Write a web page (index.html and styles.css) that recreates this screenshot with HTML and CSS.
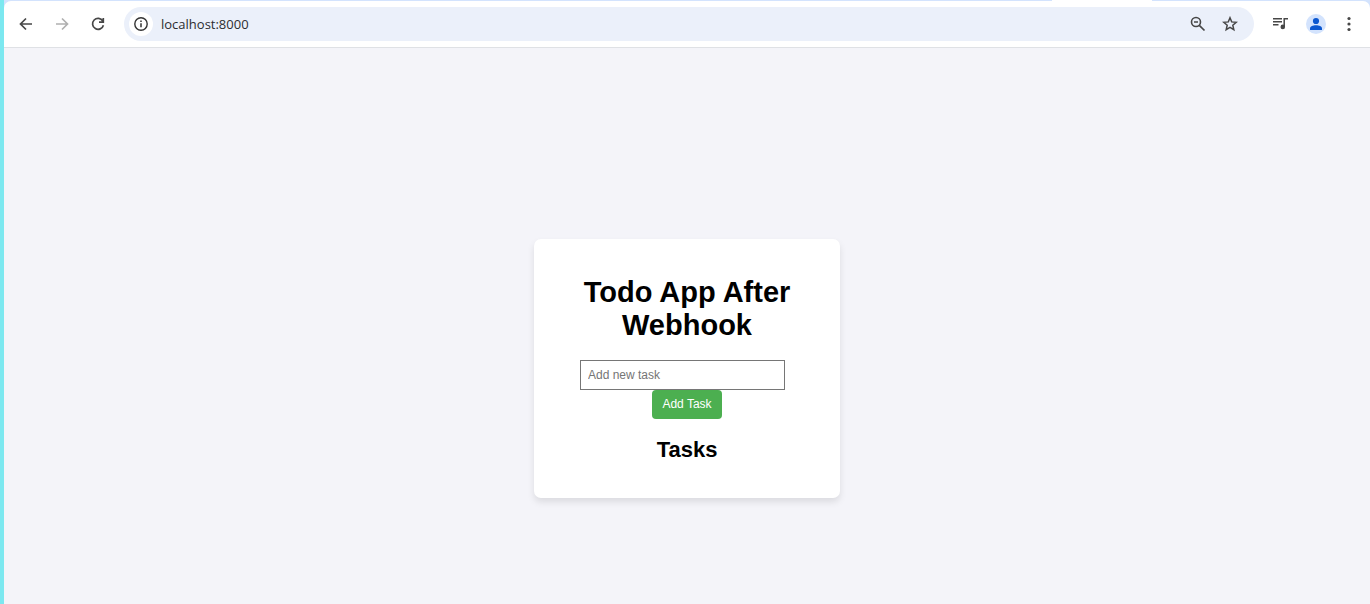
FILE: index.html
```
<!DOCTYPE html>
<html lang="en">
<head>
<meta charset="utf-8">
<title>Todo App</title>
<link rel="stylesheet" href="styles.css">
</head>
<body>
<div class="window">
  <div class="tab-strip"><div class="active-tab"></div></div>
  <header class="toolbar">
    <nav class="nav" aria-label="Navigation">
      <button class="icon-button" type="button" aria-label="Back"><svg viewBox="0 0 16 16"><path d="M14 8H3M8 2.500 2.500 8 8 13.500" fill="none" stroke="currentColor" stroke-width="1.700"/></svg></button>
      <button class="icon-button muted" type="button" aria-label="Forward"><svg viewBox="0 0 16 16"><path d="M2 8h11M8 2.500 13.500 8 8 13.500" fill="none" stroke="currentColor" stroke-width="1.700"/></svg></button>
      <button class="icon-button" type="button" aria-label="Reload"><svg viewBox="0 0 16 16"><path d="M12.800 5A5.500 5.500 0 1 0 13.400 9.200M13.300 2v4.200H9" fill="none" stroke="currentColor" stroke-width="1.700"/></svg></button>
    </nav>
    <div class="omnibox">
      <button class="site-info" type="button" aria-label="Site information"><svg viewBox="0 0 16 16"><circle cx="8" cy="8" r="6.200" fill="none" stroke="currentColor" stroke-width="1.400"/><path d="M8 7.200v4M8 4.600v1.500" stroke="currentColor" stroke-width="1.500"/></svg></button>
      <input class="address" type="text" value="localhost:8000" aria-label="Address">
      <button class="icon-button" type="button" aria-label="Zoom out"><svg viewBox="0 0 16 16"><circle cx="6" cy="6" r="4.500" fill="none" stroke="currentColor" stroke-width="1.600"/><path d="M9.300 9.300 14.500 14.500M4 6h4" fill="none" stroke="currentColor" stroke-width="1.700"/></svg></button>
      <button class="icon-button" type="button" aria-label="Bookmark"><svg viewBox="0 0 16 16"><path d="m8 1.800 1.700 4.100 4.500.4-3.400 2.900 1 4.400L8 11.300l-3.800 2.300 1-4.400-3.400-2.900 4.500-.4z" fill="none" stroke="currentColor" stroke-width="1.500"/></svg></button>
    </div>
    <div class="actions">
      <button class="icon-button" type="button" aria-label="Media controls"><svg viewBox="0 0 16 16"><path d="M1 2.700h9M1 5.700h9M1 8.700h5.500M12.200 11V2.700H16" fill="none" stroke="currentColor" stroke-width="1.500"/><circle cx="10.800" cy="10.900" r="2.300" fill="currentColor"/></svg></button>
      <button class="profile" type="button" aria-label="Profile"><svg viewBox="0 0 20 20"><circle cx="10" cy="7" r="3.100" fill="currentColor"/><path d="M4 16v-1.600c0-2 3-3.200 6-3.200s6 1.200 6 3.200V16z" fill="currentColor"/></svg></button>
      <button class="icon-button" type="button" aria-label="Menu"><svg viewBox="0 0 16 16"><g fill="currentColor"><circle cx="8" cy="2.500" r="1.600"/><circle cx="8" cy="8" r="1.600"/><circle cx="8" cy="13.500" r="1.600"/></g></svg></button>
    </div>
  </header>
  <main class="page">
    <section class="card">
      <h1 class="title">Todo App After Webhook</h1>
      <form class="task-form">
        <input class="task-input" type="text" placeholder="Add new task" aria-label="New task">
        <button class="add-button" type="button">Add Task</button>
      </form>
      <h2 class="subtitle">Tasks</h2>
    </section>
  </main>
</div>
</body>
</html>
```
FILE: styles.css
```
* { box-sizing: border-box; }
body {
  margin: 0;
  padding-left: 4px;
  background: #7ce8f0;
  font-family: "Liberation Sans", Arial, sans-serif;
}
button { border: 0; padding: 0; background: none; font: inherit; }
svg { display: block; width: 16px; height: 16px; }
.window {
  display: flex;
  flex-direction: column;
  min-height: 100vh;
  background: #d3e3fd;
}
.tab-strip { height: 1px; padding-right: 218px; }
.active-tab { width: 100px; height: 1px; margin-left: auto; background: #fff; }
.toolbar {
  display: flex;
  align-items: center;
  height: 47px;
  padding: 0 9px 0 10px;
  background: #fff;
  border-bottom: 1px solid #dfe1e5;
  border-radius: 7px 7px 0 0;
}
.nav { display: flex; gap: 12px; }
.icon-button {
  display: grid;
  place-items: center;
  width: 24px;
  height: 24px;
  color: #474747;
}
.muted { color: #b0b0b0; }
.omnibox {
  display: flex;
  flex: 1;
  align-items: center;
  gap: 8px;
  height: 34px;
  margin-left: 14px;
  padding: 0 12px 0 5px;
  border-radius: 17px;
  background: #ebf0fa;
}
.site-info {
  display: grid;
  place-items: center;
  width: 24px;
  height: 24px;
  border-radius: 50%;
  background: #fff;
  color: #333;
}
.address {
  flex: 1;
  min-width: 0;
  padding: 0;
  border: 0;
  background: none;
  color: #2b2d30;
  font-family: "Open Sans", sans-serif;
  font-size: 13px;
}
.actions { display: flex; align-items: center; margin-left: 14px; }
.profile {
  width: 20px;
  height: 20px;
  margin: 0 11px 0 14px;
  border-radius: 50%;
  background: #d3e3fd;
  color: #0b57d0;
}
.profile svg { width: 20px; height: 20px; }
.page {
  display: flex;
  flex: 1;
  align-items: center;
  justify-content: center;
  padding-top: 85px;
  background: #f4f4f9;
}
.card {
  width: 306px;
  padding: 18px;
  border-radius: 7px;
  background: #fff;
  box-shadow: 0 4px 7px rgba(0, 0, 0, 0.1);
  text-align: center;
}
.title { margin: 19px 0 18px; font-size: 29px; line-height: 33px; }
.task-form { display: flex; flex-wrap: wrap; justify-content: center; }
.task-input {
  width: 205px;
  height: 30px;
  margin-right: 9px;
  padding: 7px;
  border: 1px solid #767676;
  font-family: inherit;
  font-size: 12px;
}
.task-input::placeholder { color: #757575; }
.add-button {
  width: 70px;
  height: 29px;
  padding-bottom: 2px;
  border-radius: 4px;
  background: #4caf50;
  color: #fff;
  font-size: 12px;
}
.subtitle { margin: 18px 0; font-size: 22px; line-height: 25px; }
```
